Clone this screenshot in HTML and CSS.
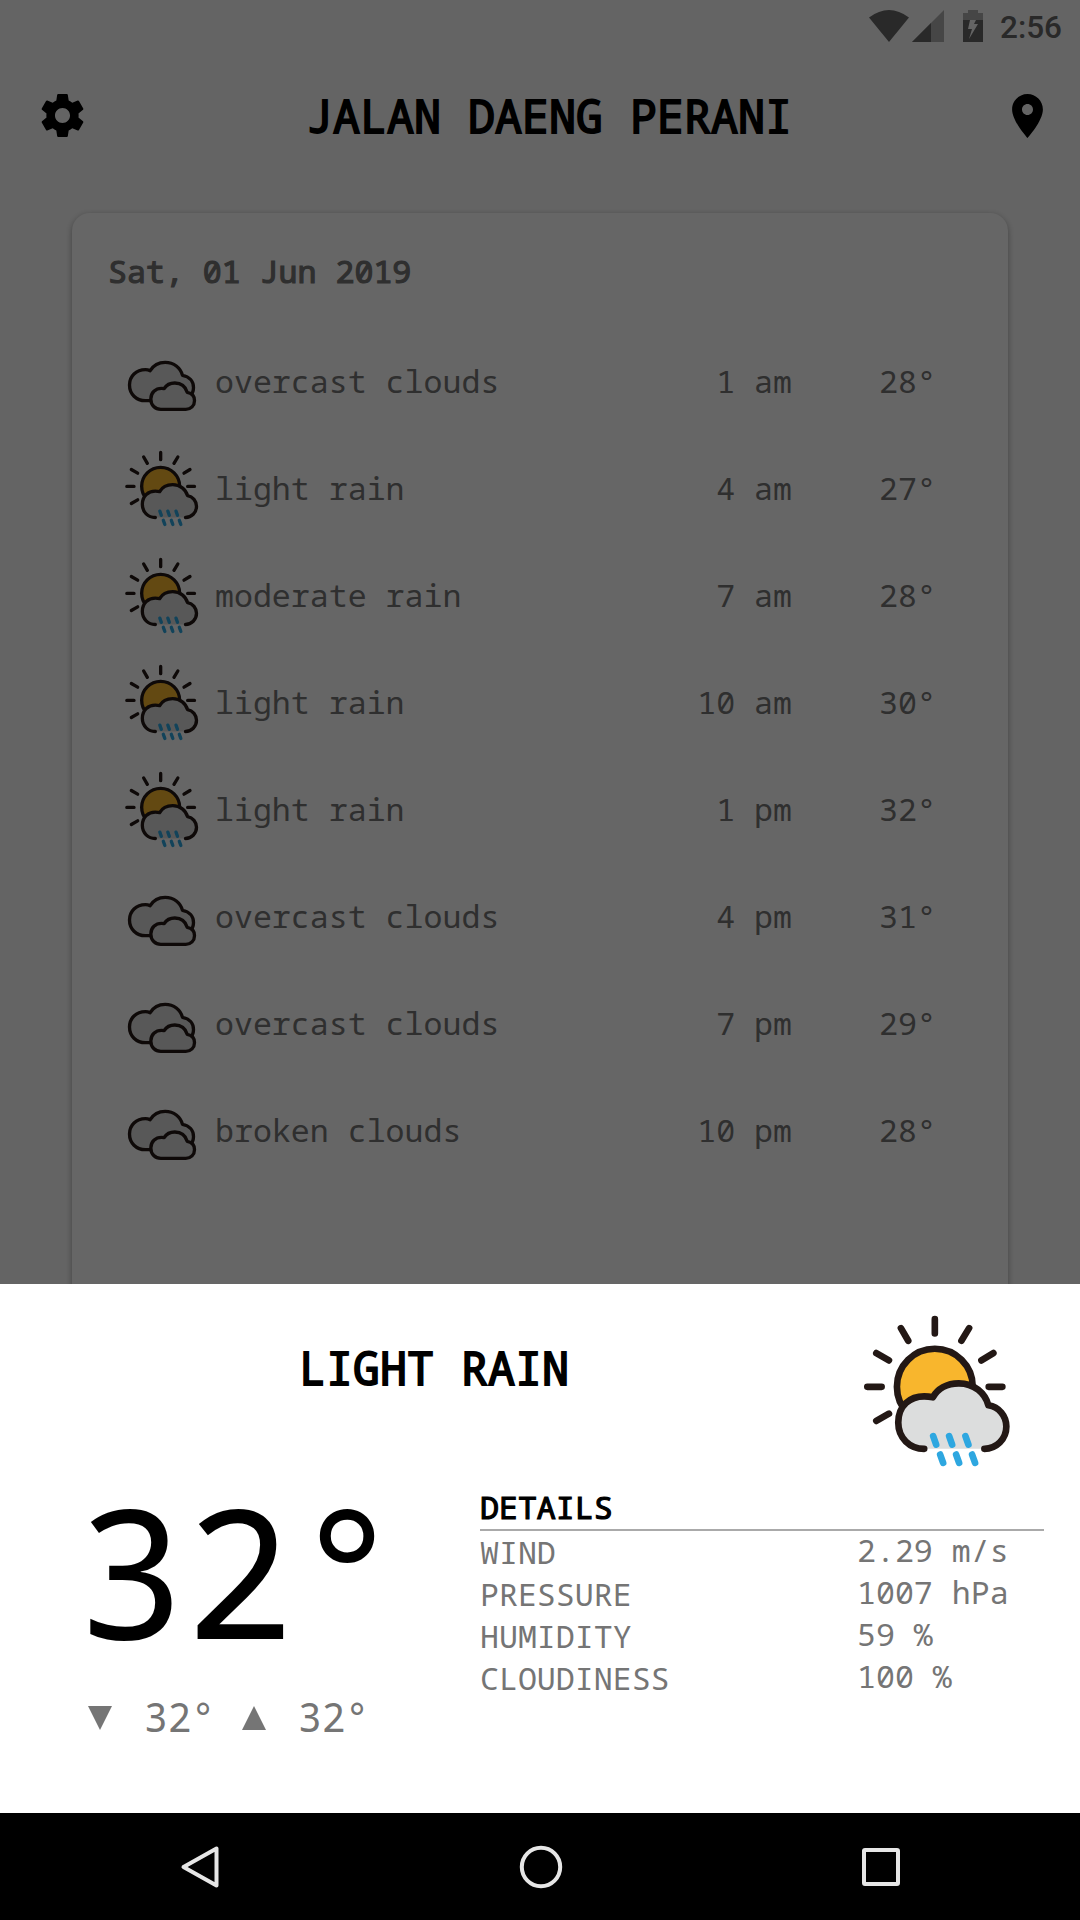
FILE: index.html
```html
<!DOCTYPE html>
<html lang="en">
<head>
<meta charset="utf-8">
<title>Weather</title>
<link rel="stylesheet" href="styles.css">
</head>
<body>
<svg class="defs" aria-hidden="true">
  <symbol id="rain" viewBox="60 60 460 480">
    <g fill="none" stroke="#231815" stroke-width="20" stroke-linecap="round" stroke-linejoin="round">
      <path d="M285 87V130M183 114l22 38M388 114l-23 38M109 189l38 22M461 189l-36 22M82 290.500H125M447 290.500H488M109 393l38-22"/>
      <circle cx="285" cy="290" r="114" fill="#f8b62d"/>
      <path stroke="none" fill="#dcdddd" d="M253 477C210 477 175 445 175 398C175 345 212 319 253 319Q266 319 279 322C293 297 321 280 357 280C403 280 436 309 446 346C478 351 500 378 500 410C500 448 470 477 434 477Z"/>
      <path d="M253 477C210 477 175 445 175 398C175 345 212 319 253 319Q266 319 279 322C293 297 321 280 357 280C403 280 436 309 446 346C478 351 500 378 500 410C500 448 470 477 434 477"/>
      <path stroke="#2ea7e0" d="M280 439l9 25M328 439l9 25M377 439l9 25M301 494l9 25M349 494l9 25M397 494l9 25"/>
    </g>
  </symbol>
  <symbol id="cloud" viewBox="70 3 230 240">
    <g fill="#dcdddd" stroke="#231815" stroke-width="10" stroke-linecap="round" stroke-linejoin="round">
      <path d="M137 182C109 182 89 162 89 135C89 108 109 89 137 89Q144 89 151 92C160 77 176 67 196 67C222 67 242 83 248 106C269 110 281 124 281 143Q281 152 277 161L250 182Z"/>
      <path d="M183 208C166 208 153 196 153 177C153 158 167 145 185 145Q189 145 193 146C199 136 210 129 225 129C244 129 257 140 262 157C275 159 284 168 284 182C284 197 273 208 258 208Z"/>
    </g>
  </symbol>
</svg>

<div class="screen">
  <main class="app">
    <div class="status">
      <svg class="wifi" viewBox="0 0 40 32"><path d="M0 7.500Q20-7.500 40 7.500L20 32Z"/></svg>
      <svg class="signal" viewBox="0 0 32 32"><path opacity=".5" d="M32 0V32H0Z"/><path d="M19 13V32H0Z"/></svg>
      <svg class="battery" viewBox="0 0 20 32"><path opacity=".5" d="M5 0H15V3H20V10H0V3H5Z"/><path fill-rule="evenodd" d="M0 10H7L5 19H9L6 29L15 14H11L13 10H20V32H0Z"/></svg>
      <span class="clock">2:56</span>
    </div>
    <header class="header">
      <svg class="gear" viewBox="2 2 20 20"><path d="M19.430 12.980c.04-.32.07-.64.07-.98s-.03-.66-.07-.98l2.110-1.650c.19-.15.24-.42.12-.64l-2-3.460c-.12-.22-.39-.3-.61-.22l-2.490 1c-.52-.4-1.080-.73-1.690-.98l-.38-2.650C14.460 2.180 14.250 2 14 2h-4c-.25 0-.46.18-.49.42l-.38 2.650c-.61.25-1.170.59-1.690.98l-2.490-1c-.23-.09-.49 0-.61.22l-2 3.460c-.13.22-.07.49.12.64l2.110 1.650c-.04.32-.07.65-.07.98s.03.66.07.98l-2.110 1.650c-.19.15-.24.42-.12.64l2 3.460c.12.22.39.3.61.22l2.490-1c.52.4 1.080.73 1.690.98l.38 2.650c.03.24.24.42.49.42h4c.25 0 .46-.18.49-.42l.38-2.650c.61-.25 1.170-.59 1.690-.98l2.490 1c.23.09.49 0 .61-.22l2-3.460c.12-.22.07-.49-.12-.64l-2.110-1.650zM12 15.500c-1.930 0-3.500-1.570-3.500-3.500s1.570-3.500 3.500-3.500 3.500 1.570 3.500 3.500-1.570 3.500-3.500 3.500z"/></svg>
      <h1 class="title">JALAN DAENG PERANI</h1>
      <svg class="pin" viewBox="5 2 14 20"><path d="M12 2C8.130 2 5 5.130 5 9c0 5.250 7 13 7 13s7-7.750 7-13c0-3.870-3.130-7-7-7zm0 9.500c-1.380 0-2.500-1.120-2.500-2.500s1.120-2.500 2.500-2.500 2.500 1.120 2.500 2.500-1.120 2.500-2.500 2.500z"/></svg>
    </header>
    <section class="card">
      <h2 class="date">Sat, 01 Jun 2019</h2>
      <div class="row"><svg class="icon"><use href="#cloud"/></svg><span class="desc">overcast clouds</span><span class="time">1 am</span><span class="temp">28°</span></div>
      <div class="row"><svg class="icon"><use href="#rain"/></svg><span class="desc">light rain</span><span class="time">4 am</span><span class="temp">27°</span></div>
      <div class="row"><svg class="icon"><use href="#rain"/></svg><span class="desc">moderate rain</span><span class="time">7 am</span><span class="temp">28°</span></div>
      <div class="row"><svg class="icon"><use href="#rain"/></svg><span class="desc">light rain</span><span class="time">10 am</span><span class="temp">30°</span></div>
      <div class="row"><svg class="icon"><use href="#rain"/></svg><span class="desc">light rain</span><span class="time">1 pm</span><span class="temp">32°</span></div>
      <div class="row"><svg class="icon"><use href="#cloud"/></svg><span class="desc">overcast clouds</span><span class="time">4 pm</span><span class="temp">31°</span></div>
      <div class="row"><svg class="icon"><use href="#cloud"/></svg><span class="desc">overcast clouds</span><span class="time">7 pm</span><span class="temp">29°</span></div>
      <div class="row"><svg class="icon"><use href="#cloud"/></svg><span class="desc">broken clouds</span><span class="time">10 pm</span><span class="temp">28°</span></div>
    </section>
    <div class="scrim"></div>
  </main>

  <section class="sheet">
    <div class="sheet-head">
      <h2 class="title">LIGHT RAIN</h2>
      <svg class="big-icon"><use href="#rain"/></svg>
    </div>
    <div class="sheet-body">
      <div class="now">
        <div class="now-temp">32°</div>
        <div class="range">
          <svg class="tri" viewBox="0 0 24 24"><path d="M0 0H24L12 24Z"/></svg><span class="low">32°</span>
          <svg class="tri" viewBox="0 0 24 24"><path d="M12 0L24 24H0Z"/></svg><span>32°</span>
        </div>
      </div>
      <div class="details">
        <h3 class="details-title">DETAILS</h3>
        <div class="pair"><span>WIND</span><span class="value">2.29 m/s</span></div>
        <div class="pair"><span>PRESSURE</span><span class="value">1007 hPa</span></div>
        <div class="pair"><span>HUMIDITY</span><span class="value">59 %</span></div>
        <div class="pair"><span>CLOUDINESS</span><span class="value">100 %</span></div>
      </div>
    </div>
  </section>

  <nav class="nav">
    <svg viewBox="0 0 44 44"><path d="M37.500 3.500V40.500L4.500 22Z"/></svg>
    <svg viewBox="0 0 44 44"><circle cx="22" cy="22" r="19.200"/></svg>
    <svg viewBox="0 0 44 44"><rect x="5" y="5" width="34" height="34" rx="1"/></svg>
  </nav>
</div>
</body>
</html>
```

FILE: styles.css
```css
* { box-sizing: border-box; }
body {
  margin: 0;
  background: #000;
  color: #757575;
  font: 31.6px/42px "Droid Sans Mono", "Noto Sans Mono", "DejaVu Sans Mono", monospace;
}
h1, h2, h3 { margin: 0; font-weight: 400; }
svg { display: block; flex: none; }
.defs { position: absolute; width: 0; height: 0; }
.screen { width: 1080px; height: 1920px; display: flex; flex-direction: column; overflow: hidden; }

.app { position: relative; height: 1284px; background: #fafafa; overflow: hidden; }
.scrim { position: absolute; inset: 0; background: rgba(0, 0, 0, .6); }

.status { height: 63px; padding: 10px 18px 0 869px; display: flex; align-items: flex-start; fill: #666; }
.wifi { width: 40px; height: 32px; }
.signal { width: 32px; height: 32px; margin-left: 3px; }
.battery { width: 20px; height: 32px; margin-left: 19px; }
.clock { margin-left: auto; font: 500 31.5px/36px Roboto, sans-serif; color: #666; }

.header { height: 150px; padding: 0 37px 45px 41px; display: flex; align-items: center; justify-content: space-between; }
.gear { width: 43px; height: 45px; }
.pin { width: 31px; height: 44px; }
.title { font-size: 45px; line-height: 60px; color: #000; -webkit-text-stroke: 1.8px #000; white-space: nowrap; }
.header .title { padding-left: 2px; }

.card {
  width: 936px; height: 1200px; margin: 0 auto; padding-top: 37px;
  border-radius: 18px; background: #fff;
  box-shadow: 0 2px 6px rgba(0, 0, 0, .34);
}
.date { padding-left: 36px; margin-bottom: 35px; font-size: 31.6px; line-height: 42px; -webkit-text-stroke: 1.2px #757575; }
.row { height: 107px; padding-left: 51px; display: flex; align-items: center; }
.icon { width: 77px; height: 80px; }
.desc { flex: 1; padding-left: 15px; }
.time { width: 140px; text-align: right; }
.temp { width: 216px; padding-left: 87px; }

.sheet { height: 529px; background: #fff; }
.sheet-head { height: 192px; padding: 26px 67px 0 299px; display: flex; justify-content: space-between; }
.sheet-head .title { padding-top: 28px; }
.big-icon { width: 153px; height: 160px; }
.sheet-body { display: flex; padding-left: 80px; }
.now { width: 400px; }
.now-temp { height: 186px; margin-left: -3px; font-size: 180px; line-height: 188px; color: #000; }
.range { display: flex; align-items: center; padding: 29px 0 0 8px; font-size: 39.4px; line-height: 52px; }
.tri { width: 24px; height: 24px; margin-top: 2px; fill: #757575; }
.range span { padding-left: 32px; }
.low { width: 130px; }
.details { width: 564px; padding-top: 10px; }
.details-title { height: 45px; border-bottom: 2px solid #aaa; font-size: 31.6px; line-height: 42px; color: #000; -webkit-text-stroke: 1.2px #000; }
.pair { display: flex; justify-content: space-between; }
.value { width: 187px; margin-top: -2px; height: 42px; }

.nav { height: 107px; padding: 0 177px 0 179px; display: flex; align-items: center; justify-content: space-between; fill: none; stroke: #e6e6e6; stroke-width: 4; stroke-linejoin: round; }
.nav svg { width: 44px; height: 44px; }
```
